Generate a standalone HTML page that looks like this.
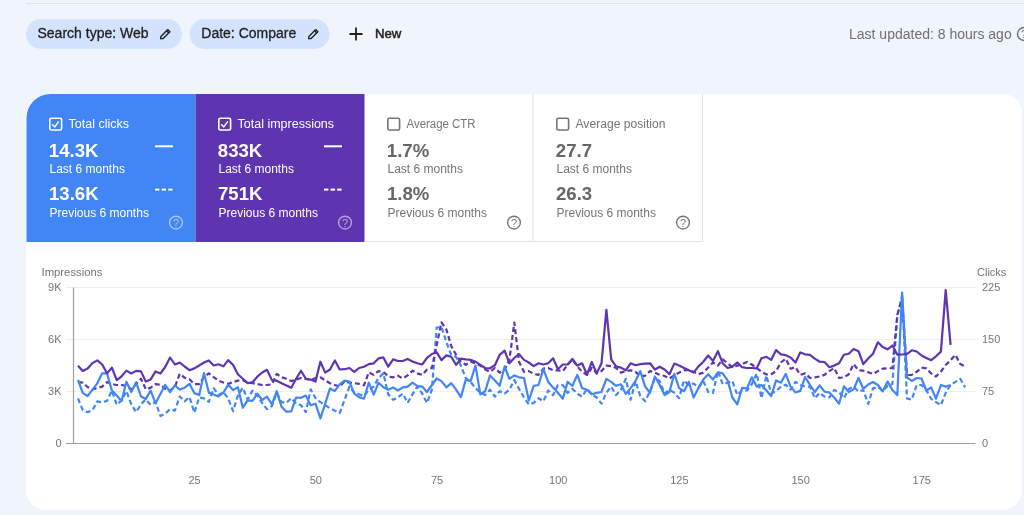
<!DOCTYPE html>
<html><head><meta charset="utf-8">
<style>
*{box-sizing:border-box;margin:0;padding:0}
html,body{width:1024px;height:515px;overflow:hidden;background:#f0f4fc;font-family:"Liberation Sans",sans-serif}
svg{position:absolute;left:0;top:0;will-change:transform}
</style></head><body>
<svg width="1024" height="515" viewBox="0 0 1024 515" font-family="Liberation Sans, sans-serif">
<rect x="26" y="3" width="998" height="1" fill="#dfe1e5"/>
<rect x="26" y="19" width="156" height="30" rx="15" fill="#d3e3fd"/>
<text x="37.5" y="38.1" font-size="14" fill="#1f1f1f" stroke="#1f1f1f" stroke-width="0.3">Search type: Web</text>
<path d="M160.6,38.7 L160.9,36.4 L167.7,29.599999999999998 L169.9,31.8 L163.1,38.6 Z M166.5,30.8 L168.7,33.0" fill="none" stroke="#1f1f1f" stroke-width="1.35" stroke-linejoin="round"/>
<rect x="189.5" y="19" width="140" height="30" rx="15" fill="#d3e3fd"/>
<text x="201.3" y="38.1" font-size="14" fill="#1f1f1f" stroke="#1f1f1f" stroke-width="0.3">Date: Compare</text>
<path d="M308.6,38.7 L308.90000000000003,36.4 L315.70000000000005,29.599999999999998 L317.90000000000003,31.8 L311.1,38.6 Z M314.5,30.8 L316.70000000000005,33.0" fill="none" stroke="#1f1f1f" stroke-width="1.35" stroke-linejoin="round"/>
<path d="M356,27.6 V40.5 M349.5,34 H362.5" stroke="#1f1f1f" stroke-width="1.8"/>
<text x="375" y="37.8" font-size="13.2" fill="#1f1f1f" stroke="#1f1f1f" stroke-width="0.5">New</text>
<text x="849" y="38.8" font-size="14" fill="#707070">Last updated: 8 hours ago</text>
<circle cx="1024" cy="34" r="6.5" fill="none" stroke="#707070" stroke-width="1.4"/>
<text x="1024" y="38" font-size="11" text-anchor="middle" fill="#707070">?</text>

<path d="M26,118 A24,24 0 0 1 50,94 H1003 A19,19 0 0 1 1022,113 V490 A20,20 0 0 1 1002,510 H46 A20,20 0 0 1 26,490 Z" fill="#ffffff"/>
<path d="M26.5,118 A24,24 0 0 1 50.5,94 H195.5 V242 H26.5 Z" fill="#4285f4"/>
<rect x="195.5" y="94" width="169" height="148" fill="#5e35b1"/>
<path d="M364.5,241.5 H533 V94" fill="none" stroke="#e3e3e3" stroke-width="1"/>
<path d="M533,241.5 H702.5 V94" fill="none" stroke="#e3e3e3" stroke-width="1"/>
<rect x="49.8" y="118.2" width="11.8" height="11.8" rx="1.6" fill="none" stroke="#ffffff" stroke-width="1.6"/>
<path d="M52.1,124.2 L54.8,126.9 L58.8,121.4" fill="none" stroke="#ffffff" stroke-width="1.4"/>
<text x="68.5" y="128.3" font-size="12.5" fill="#ffffff">Total clicks</text>
<text x="48.8" y="156.6" font-size="18.6" font-weight="bold" fill="#ffffff">14.3K</text>
<text x="49.5" y="173.3" font-size="12" fill="#ffffff">Last 6 months</text>
<text x="49.0" y="199.6" font-size="18.6" font-weight="bold" fill="#ffffff">13.6K</text>
<text x="49.5" y="216.5" font-size="12" fill="#ffffff">Previous 6 months</text>
<rect x="155.0" y="145.3" width="18" height="2" fill="#ffffff"/>
<rect x="155.0" y="188.6" width="4.4" height="2" fill="#ffffff"/>
<rect x="161.6" y="188.6" width="4.4" height="2" fill="#ffffff"/>
<rect x="168.2" y="188.6" width="4.4" height="2" fill="#ffffff"/>
<circle cx="176.0" cy="222.6" r="6.4" fill="none" stroke="rgba(255,255,255,0.55)" stroke-width="1.4"/>
<text x="176.0" y="226.6" font-size="11" text-anchor="middle" fill="rgba(255,255,255,0.55)">?</text>
<rect x="218.8" y="118.2" width="11.8" height="11.8" rx="1.6" fill="none" stroke="#ffffff" stroke-width="1.6"/>
<path d="M221.1,124.2 L223.8,126.9 L227.8,121.4" fill="none" stroke="#ffffff" stroke-width="1.4"/>
<text x="237.5" y="128.3" font-size="12.5" fill="#ffffff">Total impressions</text>
<text x="217.8" y="156.6" font-size="18.6" font-weight="bold" fill="#ffffff">833K</text>
<text x="218.5" y="173.3" font-size="12" fill="#ffffff">Last 6 months</text>
<text x="218.0" y="199.6" font-size="18.6" font-weight="bold" fill="#ffffff">751K</text>
<text x="218.5" y="216.5" font-size="12" fill="#ffffff">Previous 6 months</text>
<rect x="324.0" y="145.3" width="18" height="2" fill="#ffffff"/>
<rect x="324.0" y="188.6" width="4.4" height="2" fill="#ffffff"/>
<rect x="330.6" y="188.6" width="4.4" height="2" fill="#ffffff"/>
<rect x="337.2" y="188.6" width="4.4" height="2" fill="#ffffff"/>
<circle cx="345.0" cy="222.6" r="6.4" fill="none" stroke="rgba(255,255,255,0.55)" stroke-width="1.4"/>
<text x="345.0" y="226.6" font-size="11" text-anchor="middle" fill="rgba(255,255,255,0.55)">?</text>
<rect x="387.8" y="118.2" width="11.8" height="11.8" rx="1.6" fill="none" stroke="#757575" stroke-width="1.6"/>
<text x="406.5" y="128.3" font-size="12.5" fill="#757575" textLength="69" lengthAdjust="spacingAndGlyphs">Average CTR</text>
<text x="386.8" y="156.6" font-size="18.6" font-weight="bold" fill="#666666">1.7%</text>
<text x="387.5" y="173.3" font-size="12" fill="#757575">Last 6 months</text>
<text x="387.0" y="199.6" font-size="18.6" font-weight="bold" fill="#666666">1.8%</text>
<text x="387.5" y="216.5" font-size="12" fill="#757575">Previous 6 months</text>
<circle cx="514.0" cy="222.6" r="6.4" fill="none" stroke="#757575" stroke-width="1.4"/>
<text x="514.0" y="226.6" font-size="11" text-anchor="middle" fill="#757575">?</text>
<rect x="556.8" y="118.2" width="11.8" height="11.8" rx="1.6" fill="none" stroke="#757575" stroke-width="1.6"/>
<text x="575.5" y="128.3" font-size="12.5" fill="#757575" textLength="90" lengthAdjust="spacingAndGlyphs">Average position</text>
<text x="555.8" y="156.6" font-size="18.6" font-weight="bold" fill="#666666">27.7</text>
<text x="556.5" y="173.3" font-size="12" fill="#757575">Last 6 months</text>
<text x="556.0" y="199.6" font-size="18.6" font-weight="bold" fill="#666666">26.3</text>
<text x="556.5" y="216.5" font-size="12" fill="#757575">Previous 6 months</text>
<circle cx="683.0" cy="222.6" r="6.4" fill="none" stroke="#757575" stroke-width="1.4"/>
<text x="683.0" y="226.6" font-size="11" text-anchor="middle" fill="#757575">?</text>
<line x1="66" y1="287.5" x2="975.5" y2="287.5" stroke="#efefef" stroke-width="1"/><line x1="66" y1="339.5" x2="975.5" y2="339.5" stroke="#efefef" stroke-width="1"/><line x1="66" y1="391.5" x2="975.5" y2="391.5" stroke="#efefef" stroke-width="1"/><line x1="66" y1="443.5" x2="975.5" y2="443.5" stroke="#9e9e9e" stroke-width="1.2"/><line x1="73.5" y1="287.5" x2="73.5" y2="443.5" stroke="#9e9e9e" stroke-width="1.2"/>
<text x="41.5" y="275.5" font-size="11.3" fill="#757575">Impressions</text><text x="977" y="275.6" font-size="11" fill="#757575">Clicks</text><text x="61.5" y="291.3" font-size="11" text-anchor="end" fill="#757575">9K</text><text x="982" y="291.3" font-size="11" fill="#757575">225</text><text x="61.5" y="343.3" font-size="11" text-anchor="end" fill="#757575">6K</text><text x="982" y="343.3" font-size="11" fill="#757575">150</text><text x="61.5" y="395.3" font-size="11" text-anchor="end" fill="#757575">3K</text><text x="982" y="395.3" font-size="11" fill="#757575">75</text><text x="61.5" y="447.3" font-size="11" text-anchor="end" fill="#757575">0</text><text x="982" y="447.3" font-size="11" fill="#757575">0</text><text x="194.6" y="483.6" font-size="11" text-anchor="middle" fill="#757575">25</text><text x="315.8" y="483.6" font-size="11" text-anchor="middle" fill="#757575">50</text><text x="437.0" y="483.6" font-size="11" text-anchor="middle" fill="#757575">75</text><text x="558.2" y="483.6" font-size="11" text-anchor="middle" fill="#757575">100</text><text x="679.4" y="483.6" font-size="11" text-anchor="middle" fill="#757575">125</text><text x="800.6" y="483.6" font-size="11" text-anchor="middle" fill="#757575">150</text><text x="921.8" y="483.6" font-size="11" text-anchor="middle" fill="#757575">175</text>

<path d="M78.0,398.4 L82.8,410.2 L87.6,412.1 L92.5,410.2 L97.3,401.4 L102.2,402.3 L107.0,400.9 L111.9,390.6 L116.7,404.8 L121.6,400.4 L126.4,391.1 L131.3,404.3 L136.1,412.1 L141.0,404.3 L145.8,399.4 L150.7,404.8 L155.5,402.0 L160.4,416.0 L165.2,413.5 L170.1,409.2 L174.9,410.6 L179.8,396.5 L184.6,401.4 L189.5,397.0 L194.3,412.6 L199.2,397.5 L204.0,398.4 L208.8,401.9 L213.7,388.2 L218.5,395.0 L223.4,392.1 L228.2,398.4 L233.1,411.1 L237.9,395.5 L242.8,387.7 L247.6,399.4 L252.5,390.6 L257.3,395.5 L262.2,403.0 L267.0,409.1 L271.9,406.0 L276.7,392.8 L281.6,402.1 L286.4,402.9 L291.3,398.2 L296.1,403.7 L301.0,405.2 L305.8,412.2 L310.7,389.4 L315.5,398.2 L320.4,402.1 L325.2,405.2 L330.0,408.3 L334.9,410.7 L339.7,413.0 L344.6,399.8 L349.4,386.6 L354.3,392.8 L359.1,394.3 L364.0,395.9 L368.8,389.7 L373.7,386.6 L378.5,378.0 L383.4,373.4 L388.2,394.3 L393.1,399.8 L397.9,397.5 L402.8,393.6 L407.6,402.9 L412.5,394.3 L417.3,386.6 L422.2,393.6 L427.0,402.9 L431.9,389.7 L436.7,327.5 L441.5,327.0 L446.4,342.0 L451.2,355.0 L456.1,357.0 L460.9,365.6 L465.8,378.0 L470.6,381.9 L475.5,388.1 L480.3,392.8 L485.2,395.1 L490.0,389.7 L494.9,396.7 L499.7,391.2 L504.6,393.6 L509.4,389.7 L514.3,380.1 L519.1,388.9 L524.0,397.5 L528.8,404.4 L533.7,402.9 L538.5,398.2 L543.4,401.3 L548.2,390.5 L553.1,395.1 L557.9,385.0 L562.8,385.0 L567.6,392.8 L572.4,388.9 L577.3,393.6 L582.1,396.7 L587.0,388.9 L591.8,394.3 L596.7,397.5 L601.5,403.7 L606.4,392.8 L611.2,386.6 L616.1,395.1 L620.9,390.0 L625.8,378.8 L630.6,399.8 L635.5,381.1 L640.3,395.9 L645.2,401.3 L650.0,391.2 L654.9,378.0 L659.7,381.1 L664.6,393.6 L669.4,389.7 L674.3,392.8 L679.1,398.2 L684.0,380.4 L688.8,385.0 L693.6,383.5 L698.5,387.4 L703.3,381.1 L708.2,392.0 L713.0,392.8 L717.9,371.1 L722.7,384.3 L727.6,382.7 L732.4,381.1 L737.3,395.1 L742.1,390.5 L747.0,390.5 L751.8,384.3 L756.7,373.4 L761.5,398.2 L766.4,375.4 L771.2,393.6 L776.1,391.2 L780.9,386.6 L785.8,384.7 L790.6,389.7 L795.5,381.9 L800.3,385.0 L805.1,386.6 L810.0,386.6 L814.8,398.2 L819.7,392.8 L824.5,396.7 L829.4,397.5 L834.2,390.0 L839.1,392.0 L843.9,398.2 L848.8,388.9 L853.6,386.6 L858.5,391.6 L863.3,390.0 L868.2,404.0 L873.0,388.4 L877.9,387.0 L882.7,391.0 L887.6,386.0 L892.4,384.0 L897.3,316.0 L902.1,296.0 L907.0,398.5 L911.8,399.6 L916.7,385.0 L921.5,385.0 L926.4,390.4 L931.2,398.8 L936.0,402.1 L940.9,405.2 L945.7,392.8 L950.6,385.0 L955.4,381.9 L960.3,378.8 L965.1,387.4" fill="none" stroke="#4285f4" stroke-width="2.2" stroke-dasharray="5,3" stroke-linejoin="round"/>
<path d="M78.0,382.1 L82.8,382.6 L87.6,387.0 L92.5,389.4 L97.3,388.0 L102.2,386.6 L107.0,382.1 L111.9,384.0 L116.7,385.0 L121.6,385.0 L126.4,386.0 L131.3,389.4 L136.1,384.1 L141.0,378.7 L145.8,389.4 L150.7,387.7 L155.5,384.1 L160.4,384.6 L165.2,388.8 L170.1,390.4 L174.9,387.0 L179.8,373.8 L184.6,377.7 L189.5,379.2 L194.3,384.1 L199.2,384.1 L204.0,377.2 L208.8,373.3 L213.7,377.2 L218.5,380.6 L223.4,382.6 L228.2,383.9 L233.1,382.1 L237.9,380.6 L242.8,380.2 L247.6,382.6 L252.5,383.1 L257.3,384.1 L262.2,385.0 L267.0,385.0 L271.9,384.3 L276.7,373.9 L281.6,377.3 L286.4,378.8 L291.3,381.1 L296.1,379.6 L301.0,378.0 L305.8,378.8 L310.7,380.1 L315.5,378.0 L320.4,377.3 L325.2,380.4 L330.0,383.2 L334.9,385.0 L339.7,386.6 L344.6,381.1 L349.4,382.7 L354.3,383.2 L359.1,383.8 L364.0,385.3 L368.8,372.3 L373.7,374.9 L378.5,371.1 L383.4,371.8 L388.2,376.5 L393.1,377.3 L397.9,375.7 L402.8,378.5 L407.6,375.4 L412.5,370.7 L417.3,373.4 L422.2,374.9 L427.0,369.5 L431.9,368.0 L436.7,345.0 L441.5,322.3 L446.4,329.6 L451.2,346.0 L456.1,354.8 L460.9,361.7 L465.8,364.8 L470.6,361.7 L475.5,363.3 L480.3,365.6 L485.2,369.5 L490.0,371.8 L494.9,368.0 L499.7,372.6 L504.6,369.5 L509.4,360.0 L514.3,322.6 L519.1,362.0 L524.0,371.8 L528.8,371.1 L533.7,373.9 L538.5,374.9 L543.4,368.7 L548.2,368.0 L553.1,370.3 L557.9,370.3 L562.8,371.1 L567.6,364.8 L572.4,359.4 L577.3,366.4 L582.1,371.8 L587.0,374.9 L591.8,368.0 L596.7,373.4 L601.5,371.1 L606.4,365.6 L611.2,366.1 L616.1,368.0 L620.9,372.6 L625.8,371.1 L630.6,370.3 L635.5,371.8 L640.3,376.5 L645.2,375.7 L650.0,371.1 L654.9,372.6 L659.7,374.9 L664.6,376.0 L669.4,378.5 L674.3,375.4 L679.1,372.6 L684.0,370.3 L688.8,369.8 L693.6,371.8 L698.5,374.2 L703.3,372.6 L708.2,367.6 L713.0,362.5 L717.9,365.6 L722.7,359.4 L727.6,363.3 L732.4,367.2 L737.3,365.6 L742.1,364.1 L747.0,362.0 L751.8,364.5 L756.7,368.0 L761.5,371.8 L766.4,374.5 L771.2,374.2 L776.1,371.1 L780.9,362.5 L785.8,358.6 L790.6,368.7 L795.5,367.2 L800.3,374.9 L805.1,373.4 L810.0,378.0 L814.8,377.3 L819.7,376.5 L824.5,374.9 L829.4,371.1 L834.2,368.0 L839.1,378.0 L843.9,377.3 L848.8,374.2 L853.6,364.1 L858.5,370.3 L863.3,370.7 L868.2,372.3 L873.0,373.9 L877.9,371.1 L882.7,368.7 L887.6,368.4 L892.4,368.0 L897.3,315.0 L902.1,298.0 L907.0,375.0 L911.8,374.9 L916.7,371.8 L921.5,367.6 L926.4,368.4 L931.2,373.4 L936.0,376.5 L940.9,371.5 L945.7,365.0 L950.6,360.2 L955.4,354.8 L960.3,364.1 L965.1,366.4" fill="none" stroke="#5e35b1" stroke-width="2.2" stroke-dasharray="5,3" stroke-linejoin="round"/>
<path d="M78.0,379.8 L82.8,393.1 L87.6,396.0 L92.5,389.6 L97.3,383.3 L102.2,373.3 L107.0,373.3 L111.9,390.6 L116.7,395.5 L121.6,400.9 L126.4,381.8 L131.3,392.1 L136.1,382.3 L141.0,396.5 L145.8,398.9 L150.7,390.6 L155.5,403.3 L160.4,394.0 L165.2,384.8 L170.1,392.1 L174.9,385.3 L179.8,389.6 L184.6,387.7 L189.5,383.8 L194.3,393.1 L199.2,395.0 L204.0,373.0 L208.8,392.6 L213.7,394.5 L218.5,396.5 L223.4,392.6 L228.2,384.8 L233.1,390.1 L237.9,387.2 L242.8,407.7 L247.6,400.4 L252.5,400.9 L257.3,393.6 L262.2,400.0 L267.0,396.7 L271.9,404.4 L276.7,391.2 L281.6,406.8 L286.4,411.7 L291.3,411.4 L296.1,397.5 L301.0,397.8 L305.8,395.6 L310.7,405.2 L315.5,403.7 L320.4,418.4 L325.2,403.7 L330.0,388.4 L334.9,390.9 L339.7,384.3 L344.6,380.7 L349.4,381.6 L354.3,393.6 L359.1,397.1 L364.0,398.7 L368.8,382.7 L373.7,394.7 L378.5,382.8 L383.4,387.3 L388.2,389.7 L393.1,387.4 L397.9,390.5 L402.8,387.4 L407.6,386.6 L412.5,382.7 L417.3,385.8 L422.2,386.6 L427.0,392.0 L431.9,385.0 L436.7,378.5 L441.5,381.1 L446.4,387.4 L451.2,383.2 L456.1,389.7 L460.9,397.1 L465.8,379.6 L470.6,381.1 L475.5,365.6 L480.3,394.3 L485.2,391.2 L490.0,375.4 L494.9,380.4 L499.7,385.8 L504.6,366.4 L509.4,378.8 L514.3,375.4 L519.1,377.3 L524.0,378.0 L528.8,400.6 L533.7,385.8 L538.5,385.0 L543.4,369.2 L548.2,381.9 L553.1,387.4 L557.9,392.8 L562.8,398.7 L567.6,381.9 L572.4,385.8 L577.3,374.9 L582.1,388.1 L587.0,389.7 L591.8,394.3 L596.7,392.8 L601.5,392.0 L606.4,378.8 L611.2,381.9 L616.1,385.8 L620.9,384.3 L625.8,394.0 L630.6,388.1 L635.5,381.1 L640.3,371.1 L645.2,386.6 L650.0,392.8 L654.9,376.5 L659.7,385.0 L664.6,395.1 L669.4,392.0 L674.3,373.9 L679.1,388.1 L684.0,391.2 L688.8,381.9 L693.6,397.5 L698.5,388.1 L703.3,379.6 L708.2,374.2 L713.0,379.6 L717.9,372.3 L722.7,373.4 L727.6,380.4 L732.4,397.5 L737.3,404.4 L742.1,387.8 L747.0,388.4 L751.8,377.3 L756.7,386.6 L761.5,385.0 L766.4,390.5 L771.2,396.2 L776.1,380.4 L780.9,382.7 L785.8,373.9 L790.6,386.6 L795.5,392.5 L800.3,390.9 L805.1,377.0 L810.0,385.0 L814.8,392.0 L819.7,385.3 L824.5,391.6 L829.4,392.5 L834.2,397.5 L839.1,403.7 L843.9,386.3 L848.8,392.0 L853.6,389.4 L858.5,378.0 L863.3,388.8 L868.2,384.5 L873.0,382.0 L877.9,385.0 L882.7,391.4 L887.6,381.6 L892.4,390.0 L897.3,395.1 L902.1,292.5 L907.0,377.3 L911.8,381.0 L916.7,378.0 L921.5,378.5 L926.4,390.5 L931.2,387.4 L936.0,398.7 L940.9,385.0 L945.7,386.6 L950.6,385.0" fill="none" stroke="#4285f4" stroke-width="2.2" stroke-linejoin="round"/>
<path d="M78.0,365.7 L82.8,370.9 L87.6,368.4 L92.5,363.1 L97.3,360.4 L102.2,364.5 L107.0,373.3 L111.9,367.7 L116.7,380.2 L121.6,376.3 L126.4,370.6 L131.3,373.5 L136.1,370.9 L141.0,371.4 L145.8,381.6 L150.7,379.4 L155.5,371.4 L160.4,373.5 L165.2,367.0 L170.1,357.5 L174.9,364.5 L179.8,362.6 L184.6,366.5 L189.5,370.2 L194.3,368.4 L199.2,365.5 L204.0,362.6 L208.8,360.4 L213.7,365.5 L218.5,364.3 L223.4,366.3 L228.2,360.1 L233.1,365.0 L237.9,374.3 L242.8,378.7 L247.6,383.1 L252.5,382.3 L257.3,376.7 L262.2,372.5 L267.0,369.8 L271.9,380.1 L276.7,380.7 L281.6,383.2 L286.4,385.5 L291.3,387.8 L296.1,378.8 L301.0,370.7 L305.8,378.8 L310.7,379.6 L315.5,381.6 L320.4,361.7 L325.2,372.6 L330.0,369.5 L334.9,360.5 L339.7,369.5 L344.6,369.2 L349.4,368.0 L354.3,371.8 L359.1,368.0 L364.0,366.7 L368.8,364.1 L373.7,363.3 L378.5,358.4 L383.4,357.4 L388.2,366.7 L393.1,359.4 L397.9,361.0 L402.8,361.0 L407.6,358.9 L412.5,361.4 L417.3,363.3 L422.2,364.5 L427.0,357.9 L431.9,354.0 L436.7,352.2 L441.5,360.1 L446.4,355.4 L451.2,356.7 L456.1,364.8 L460.9,358.6 L465.8,359.4 L470.6,359.9 L475.5,361.7 L480.3,364.8 L485.2,368.0 L490.0,368.3 L494.9,365.2 L499.7,354.8 L504.6,350.6 L509.4,363.3 L514.3,357.9 L519.1,354.3 L524.0,359.9 L528.8,362.5 L533.7,366.1 L538.5,363.3 L543.4,364.5 L548.2,363.3 L553.1,358.3 L557.9,369.2 L562.8,364.5 L567.6,364.5 L572.4,358.9 L577.3,365.6 L582.1,363.3 L587.0,374.5 L591.8,362.0 L596.7,373.4 L601.5,363.3 L606.4,309.8 L611.2,359.4 L616.1,366.4 L620.9,367.6 L625.8,370.3 L630.6,363.3 L635.5,365.2 L640.3,364.1 L645.2,363.6 L650.0,363.3 L654.9,369.5 L659.7,366.7 L664.6,369.5 L669.4,374.2 L674.3,363.6 L679.1,365.6 L684.0,368.0 L688.8,370.3 L693.6,372.6 L698.5,366.4 L703.3,361.7 L708.2,355.5 L713.0,361.0 L717.9,351.2 L722.7,363.3 L727.6,368.0 L732.4,366.7 L737.3,362.5 L742.1,367.2 L747.0,368.0 L751.8,368.0 L756.7,368.3 L761.5,358.3 L766.4,356.8 L771.2,359.9 L776.1,350.1 L780.9,354.3 L785.8,355.2 L790.6,357.4 L795.5,362.5 L800.3,352.4 L805.1,354.3 L810.0,354.8 L814.8,358.6 L819.7,361.7 L824.5,362.0 L829.4,367.2 L834.2,365.6 L839.1,363.3 L843.9,354.8 L848.8,353.7 L853.6,349.0 L858.5,351.2 L863.3,364.1 L868.2,358.6 L873.0,353.7 L877.9,342.3 L882.7,347.0 L887.6,349.3 L892.4,345.5 L897.3,354.6 L902.1,354.5 L907.0,354.0 L911.8,350.3 L916.7,351.5 L921.5,355.5 L926.4,357.9 L931.2,360.2 L936.0,356.3 L940.9,351.6 L945.7,290.1 L950.6,344.8" fill="none" stroke="#5e35b1" stroke-width="2.2" stroke-linejoin="round"/>

</svg>
</body></html>
